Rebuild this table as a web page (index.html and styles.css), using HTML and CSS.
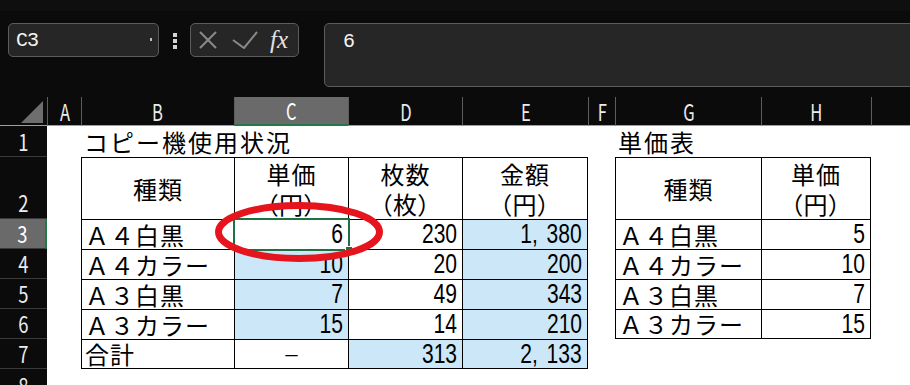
FILE: index.html
```html
<!DOCTYPE html>
<html lang="ja">
<head>
<meta charset="utf-8">
<title>Excel</title>
<link rel="stylesheet" href="styles.css">
</head>
<body>
<div class="app">
  <div class="topstrip"></div>
  <div class="fbar">
    <div class="namebox"><span class="nb-text">C3</span><span class="nb-caret"></span></div>
    <div class="grip"><i></i><i></i><i></i></div>
    <div class="btns">
      <svg class="ico-x" width="18" height="18" viewBox="0 0 18 18"><path d="M1 1L17 17M17 1L1 17" stroke="#8a8a8a" stroke-width="2" fill="none"/></svg>
      <svg class="ico-ok" width="26" height="18" viewBox="0 0 26 18"><path d="M1 9L12 17L25 1" stroke="#8a8a8a" stroke-width="2" fill="none"/></svg>
      <span class="fx">fx</span>
    </div>
    <div class="formula">6</div>
  </div>

  <div class="sheet">
    <!-- header row -->
    <div class="corner"><svg width="47" height="28" viewBox="0 0 47 28"><path d="M43 4V26H21Z" fill="#6e6e6e"/></svg></div>
    <div class="ch"><span>A</span></div>
    <div class="ch"><span>B</span></div>
    <div class="ch sel"><span>C</span></div>
    <div class="ch"><span>D</span></div>
    <div class="ch"><span>E</span></div>
    <div class="ch"><span>F</span></div>
    <div class="ch"><span>G</span></div>
    <div class="ch"><span>H</span></div>
    <div class="ch"></div>

    <!-- row 1 -->
    <div class="rh"><span>1</span></div>
    <div></div>
    <div class="c L title">コピー機使用状況</div>
    <div></div><div></div><div></div><div></div>
    <div class="c L title">単価表</div>
    <div></div><div></div>

    <!-- row 2 -->
    <div class="rh low"><span>2</span></div>
    <div></div>
    <div class="c t C">種類</div>
    <div class="c t C two">単価<br>（円）</div>
    <div class="c t C two">枚数<br>（枚）</div>
    <div class="c t C two r">金額<br>（円）</div>
    <div></div>
    <div class="c t C">種類</div>
    <div class="c t C two r">単価<br>（円）</div>
    <div></div>

    <!-- row 3 -->
    <div class="rh sel"><span>3</span></div>
    <div></div>
    <div class="c t L">Ａ４白黒</div>
    <div class="c t R act"><span class="n">6</span></div>
    <div class="c t R"><span class="n">230</span></div>
    <div class="c t R r bl"><span class="n">1<span class="cm">,</span>380</span></div>
    <div></div>
    <div class="c t L">Ａ４白黒</div>
    <div class="c t R r"><span class="n">5</span></div>
    <div></div>

    <!-- row 4 -->
    <div class="rh"><span>4</span></div>
    <div></div>
    <div class="c t L">Ａ４カラー</div>
    <div class="c t R bl"><span class="n">10</span></div>
    <div class="c t R"><span class="n">20</span></div>
    <div class="c t R r bl"><span class="n">200</span></div>
    <div></div>
    <div class="c t L">Ａ４カラー</div>
    <div class="c t R r"><span class="n">10</span></div>
    <div></div>

    <!-- row 5 -->
    <div class="rh"><span>5</span></div>
    <div></div>
    <div class="c t L">Ａ３白黒</div>
    <div class="c t R bl"><span class="n">7</span></div>
    <div class="c t R"><span class="n">49</span></div>
    <div class="c t R r bl"><span class="n">343</span></div>
    <div></div>
    <div class="c t L">Ａ３白黒</div>
    <div class="c t R r"><span class="n">7</span></div>
    <div></div>

    <!-- row 6 -->
    <div class="rh"><span>6</span></div>
    <div></div>
    <div class="c t L">Ａ３カラー</div>
    <div class="c t R bl"><span class="n">15</span></div>
    <div class="c t R"><span class="n">14</span></div>
    <div class="c t R r bl"><span class="n">210</span></div>
    <div></div>
    <div class="c t L b">Ａ３カラー</div>
    <div class="c t R r b"><span class="n">15</span></div>
    <div></div>

    <!-- row 7 -->
    <div class="rh"><span>7</span></div>
    <div></div>
    <div class="c t L b">合計</div>
    <div class="c t C b"><span class="dash">－</span></div>
    <div class="c t R b bl"><span class="n">313</span></div>
    <div class="c t R r b bl"><span class="n">2<span class="cm">,</span>133</span></div>
    <div></div><div></div><div></div><div></div>

    <!-- row 8 -->
    <div class="rh cut"><span>8</span></div>
    <div></div><div></div><div></div><div></div><div></div><div></div><div></div><div></div><div></div>

    <svg class="mark" width="180" height="72" viewBox="0 0 180 72"><ellipse cx="87" cy="32" rx="80.5" ry="26.5" fill="none" stroke="#e6141c" stroke-width="7"/></svg>
  </div>
</div>
</body>
</html>
```

FILE: styles.css
```css
html, body {
  margin: 0;
  padding: 0;
}
body {
  width: 910px;
  height: 385px;
  overflow: hidden;
  background: #0b0b0b;
  font-family: "Noto Sans CJK JP", "Noto Sans", sans-serif;
}

.topstrip {
  height: 11px;
  background: #0f0f0f;
}

.fbar {
  height: 86px;
  box-sizing: border-box;
  padding: 12px 0 0 8px;
  display: flex;
  align-items: flex-start;
  background: #0b0b0b;
}
.fbar > * {
  flex-shrink: 0;
}

.namebox {
  width: 151px;
  height: 34px;
  box-sizing: border-box;
  border: 1px solid #5c5c5c;
  border-radius: 5px;
  background: #262626;
  display: flex;
  align-items: center;
  justify-content: space-between;
  padding: 0 6px 0 7px;
}
.nb-text {
  color: #f4f4f4;
  font: 20px "Liberation Mono", monospace;
  letter-spacing: -1px;
}
.nb-caret {
  width: 2px;
  height: 3px;
  background: #bdbdbd;
  margin-top: -2px;
}

.grip {
  margin-left: 14px;
  padding-top: 10px;
  display: flex;
  flex-direction: column;
  gap: 2px;
}
.grip i {
  display: block;
  width: 4px;
  height: 4px;
  background: #d4d4d4;
}

.btns {
  margin-left: 13px;
  width: 109px;
  height: 34px;
  box-sizing: border-box;
  border: 1px solid #5c5c5c;
  border-radius: 5px;
  background: #262626;
  display: flex;
  align-items: center;
  padding-left: 8px;
}
.ico-ok {
  margin-left: 15px;
}
.fx {
  margin-left: 12px;
  color: #e2e2e2;
  font: italic 25px "Liberation Serif", serif;
  line-height: 1;
  margin-top: -2px;
}

.formula {
  margin-left: 25px;
  width: 600px;
  height: 64px;
  box-sizing: border-box;
  border: 1px solid #5c5c5c;
  border-radius: 5px;
  background: #262626;
  color: #f4f4f4;
  font: 20px "Liberation Mono", monospace;
  line-height: 22px;
  padding: 7px 0 0 18px;
}

/* sheet */
.sheet {
  position: relative;
  display: grid;
  grid-template-columns: 47px 34px 153px 114px 114px 126px 27px 146px 110px 39px;
  grid-template-rows: 29px 31px 62px 30px 30px 30px 30px 30px 16px;
  background: #ffffff;
}

.corner {
  background: #0b0b0b;
  border-bottom: 1px solid #a0a0a0;
}
.corner svg {
  display: block;
}

.ch {
  background: #0b0b0b;
  color: #ececec;
  border-left: 1px solid #5e5e5e;
  border-bottom: 1px solid #a0a0a0;
  display: flex;
  align-items: center;
  justify-content: center;
  font-size: 23px;
  line-height: 1;
}
.ch span {
  display: inline-block;
  transform: scaleX(0.72);
}
.ch.sel {
  background: #6a6a6a;
  color: #ffffff;
  border-bottom: 2px solid #1f7a47;
}

.rh {
  background: #0b0b0b;
  color: #ececec;
  border-bottom: 1px solid #3a3a3a;
  display: flex;
  align-items: center;
  justify-content: center;
  font-size: 23px;
  line-height: 1;
}
.rh span {
  display: inline-block;
  transform: scaleX(0.8);
}
.rh.low {
  align-items: flex-end;
  padding-bottom: 4px;
  box-sizing: border-box;
}
.rh.sel {
  background: #6a6a6a;
  color: #ffffff;
  border-right: 2px solid #1f7a47;
}
.rh.cut {
  align-items: flex-start;
  padding-top: 5px;
  box-sizing: border-box;
  border-bottom: 0;
}

.c {
  display: flex;
  align-items: center;
  box-sizing: border-box;
  color: #000;
  font-size: 24px;
  line-height: 1;
  white-space: nowrap;
  letter-spacing: 1px;
}
.title {
  padding-left: 5px;
  letter-spacing: 2px;
}
.t {
  border-left: 1px solid #000;
  border-top: 1px solid #000;
}
.r { border-right: 1px solid #000; }
.b { border-bottom: 1px solid #000; }
.bl { background: #cce8f8; }
.L {
  justify-content: flex-start;
  padding-left: 3px;
}
.R {
  justify-content: flex-end;
  padding-right: 5px;
}
.C {
  justify-content: center;
  text-align: center;
}
.two {
  line-height: 30px;
  font-feature-settings: "palt";
}

.n {
  display: inline-block;
  font-family: "Liberation Sans", Arial, sans-serif;
  font-size: 27px;
  line-height: 1;
  letter-spacing: 0;
  transform: scaleX(0.78);
  transform-origin: 100% 50%;
}
.cm {
  margin-right: 11px;
}

.dash {
  display: inline-block;
  font-size: 17px;
  letter-spacing: 0;
}

.act {
  position: relative;
}
.act::before {
  content: "";
  position: absolute;
  left: -2px;
  top: -2px;
  right: -2px;
  bottom: -2px;
  border: 2px solid #1e7145;
  z-index: 2;
}
.act::after {
  content: "";
  position: absolute;
  right: -5px;
  bottom: -5px;
  width: 6px;
  height: 6px;
  background: #1e7145;
  border: 1px solid #ffffff;
  z-index: 3;
}

.mark {
  position: absolute;
  left: 212px;
  top: 103px;
  z-index: 5;
  pointer-events: none;
}
```
